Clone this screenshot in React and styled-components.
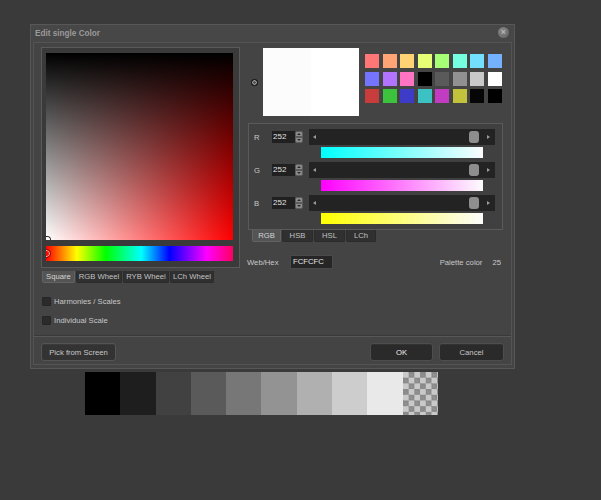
import React from 'react';
import styled, { createGlobalStyle } from 'styled-components';

const Global = createGlobalStyle`
  html, body { margin: 0; padding: 0; background: #3a3a3a; }
  body {
    font-family: "Liberation Sans", Arial, sans-serif;
    font-size: 7.7px;
    color: #c8c8c8;
  }
  * { box-sizing: border-box; }
`;

const Page = styled.div`
  width: 601px;
  height: 500px;
  overflow: hidden;
  padding-top: 24px;
`;

const Dialog = styled.div`
  margin-left: 30px;
  width: 485px;
  border: 1px solid #575757;
  background: #444444;
`;

const TitleBar = styled.div`
  height: 17px;
  display: flex;
  align-items: center;
  justify-content: space-between;
  padding: 0 4px 0 4px;
  background: #474747;
`;

const Title = styled.span`
  font-weight: bold;
  font-size: 8.2px;
  color: #9a9a9a;
`;

const CloseBtn = styled.span`
  width: 11px;
  height: 11px;
  border-radius: 50%;
  background: radial-gradient(circle at 40% 35%, #8a8a8a, #5f5f5f);
  color: #c4c4c4;
  font-size: 9px;
  line-height: 11px;
  text-align: center;
  margin-top: -3px;
  margin-right: 1px;
`;

const Body = styled.div`
  padding: 0 2px 3px 2px;
`;

const Inner = styled.div`
  border: 1px solid #545454;
  padding: 4px 7px 3px 7px;
`;

const Top = styled.div`
  display: flex;
  align-items: flex-start;
  gap: 7px;
`;

const LeftCol = styled.div`
  width: 199px;
  display: flex;
  flex-direction: column;
`;

const Frame = styled.div`
  border: 1px solid #5a5a5a;
  background: #3a3a3a;
  padding: 5px 6px 6px 4px;
  display: flex;
  flex-direction: column;
  gap: 6px;
`;

const Square = styled.div`
  position: relative;
  width: 187px;
  height: 187px;
  overflow: hidden;
  background: linear-gradient(to top, rgba(0,0,0,0), #000),
    linear-gradient(to right, #ffffff, #ff0000);
`;

const SquareCursor = styled.span`
  position: absolute;
  left: -2px;
  bottom: -3px;
  width: 6px;
  height: 6px;
  border-radius: 50%;
  border: 1px solid #ffffff;
  box-shadow: 0 0 0 1px #222;
`;

const Hue = styled.div`
  position: relative;
  width: 187px;
  height: 15px;
  overflow: hidden;
  background: linear-gradient(to right, #ff0000 0%, #ffff00 16.5%, #00ff00 32%,
    #00ffff 51%, #0000ff 66%, #ff00ff 86%, #ff0060 100%);
`;

const HueMarker = styled.span`
  position: absolute;
  left: -4px;
  top: 3px;
  width: 9px;
  height: 9px;
  border-radius: 50%;
  border: 1.5px solid #8a0000;
  box-shadow: inset 0 0 0 1px #ffb0b0;
`;

const Tabs = styled.div`
  display: flex;
  gap: ${p => p.$gap || 1}px;
  margin-left: ${p => p.$ml || 0}px;
  margin-top: ${p => p.$mt || 0}px;
`;

const Tab = styled.div`
  width: ${p => p.$w}px;
  height: 12px;
  line-height: 11px;
  text-align: center;
  white-space: nowrap;
  border-radius: 0 0 2px 2px;
  background: ${p => (p.$active ? '#545454' : '#303030')};
  border: 1px solid ${p => (p.$active ? '#636363' : '#2b2b2b')};
  border-top: none;
  color: ${p => (p.$active ? '#d4d4d4' : '#c2c2c2')};
`;

const CheckRow = styled.label`
  display: flex;
  align-items: center;
  gap: 3px;
  height: 12px;
  margin-top: ${p => p.$mt}px;
  margin-left: 1px;
`;

const Box = styled.span`
  width: 9px;
  height: 9px;
  background: #2b2b2b;
  border: 1px solid #252525;
  border-radius: 1px;
`;

const RightCol = styled.div`
  width: 257px;
  display: flex;
  flex-direction: column;
`;

const PreviewRow = styled.div`
  display: flex;
  align-items: center;
  margin-top: 1px;
  padding-left: 4px;
`;

const Radio = styled.span`
  width: 7px;
  height: 7px;
  border-radius: 50%;
  background: radial-gradient(circle, #505050 0 1px, #a0a0a0 1.5px 2px, #1a1a1a 2.5px);
`;

const Preview = styled.div`
  margin-left: 5px;
  width: 96px;
  height: 68px;
  display: flex;
`;

const PreviewHalf = styled.div`
  flex: 1;
  background: ${p => p.$c};
`;

const SwatchGrid = styled.div`
  margin-left: 6px;
  display: grid;
  grid-template-columns: repeat(8, 14px);
  column-gap: 3.5px;
  row-gap: 3.5px;
  align-self: flex-start;
  margin-top: 6px;
`;

const Swatch = styled.span`
  width: 14px;
  height: 14px;
  background: ${p => p.$c};
`;

const SliderFrame = styled.div`
  margin-top: 7px;
  margin-left: 1px;
  width: 255px;
  border: 1px solid #5a5a5a;
  background: #404040;
  padding: 5px 7px 5px 4px;
  display: flex;
  flex-direction: column;
  gap: 4px;
`;

const SliderRow = styled.div`
  display: grid;
  grid-template-columns: 19px 31px 192px;
  grid-template-rows: 16px 11px;
  row-gap: 2px;
`;

const ChanLabel = styled.span`
  align-self: center;
  color: #c8c8c8;
  padding-left: 1px;
`;

const Spin = styled.div`
  align-self: center;
  display: flex;
  height: 12px;
  width: 31px;
`;

const SpinValue = styled.span`
  width: 23px;
  background: #202020;
  color: #e2e2e2;
  line-height: 12px;
  padding-left: 1px;
  font-size: 8px;
`;

const SpinBtns = styled.span`
  width: 8px;
  display: flex;
  flex-direction: column;
`;

const SpinBtn = styled.span`
  flex: 1;
  background: #8c8c8c;
  border: 1px solid #5c5c5c;
  border-radius: ${p => (p.$up ? '2px 2px 0 0' : '0 0 2px 2px')};
  display: flex;
  align-items: center;
  justify-content: center;
  &::after {
    content: '';
    border-left: 2px solid transparent;
    border-right: 2px solid transparent;
    ${p => (p.$up ? 'border-bottom: 2px solid #2a2a2a;' : 'border-top: 2px solid #2a2a2a;')}
  }
`;

const Track = styled.div`
  margin-left: 6px;
  width: 186px;
  height: 16px;
  background: #232323;
  display: flex;
  align-items: center;
  padding: 0 5px 0 4px;
`;

const Arrow = styled.span`
  width: 0;
  height: 0;
  border-top: 2.5px solid transparent;
  border-bottom: 2.5px solid transparent;
  ${p => (p.$right ? 'border-left: 3px solid #9a9a9a;' : 'border-right: 3px solid #9a9a9a;')}
`;

const Spacer = styled.span`
  flex: 1;
`;

const Thumb = styled.span`
  width: 10px;
  height: 12px;
  border-radius: 3px;
  background: #8e8e8e;
  margin-right: 8px;
`;

const Grad = styled.div`
  grid-column: 3;
  margin: 0 12px 0 18px;
  height: 11px;
  background: linear-gradient(to right, ${p => p.$from}, #fcfcfc);
`;

const HexRow = styled.div`
  display: flex;
  align-items: center;
  height: 14px;
  margin-top: 13px;
`;

const HexLabel = styled.span`
  width: 43px;
`;

const HexInput = styled.span`
  width: 43px;
  height: 14px;
  background: #262626;
  border: 1px solid #4a4a4a;
  color: #e4e4e4;
  line-height: 12px;
  padding-left: 2px;
`;

const PaletteLabel = styled.span`
  margin-left: auto;
`;

const PaletteNum = styled.span`
  margin-left: 10px;
  margin-right: 3px;
`;

const Separator = styled.div`
  margin: 10px -7px 0 -7px;
  border-top: 1px solid #575757;
  box-shadow: 0 -1px 0 #393939;
`;

const Footer = styled.div`
  display: flex;
  align-items: center;
  gap: 6px;
  padding-top: 6px;
`;

const Button = styled.button`
  font-family: inherit;
  font-size: 7.7px;
  width: ${p => p.$w}px;
  height: 18px;
  padding: 0;
  border-radius: 3px;
  border: 1px solid ${p => (p.$dark ? '#4e4e4e' : '#555')};
  background: ${p => (p.$dark ? '#2a2a2a' : '#333333')};
  color: ${p => (p.$bright ? '#f0f0f0' : '#c8c8c8')};
  box-shadow: inset 0 1px 0 rgba(255,255,255,0.04);
  margin-left: ${p => (p.$push ? 'auto' : '0')};
`;

const Strip = styled.div`
  margin: 3px 0 0 85px;
  width: 353px;
  height: 43px;
  display: grid;
  grid-template-columns: repeat(10, 1fr);
`;

const Cell = styled.div`
  background: ${p => p.$c};
`;

const Checker = styled.div`
  background-color: #c9c9c9;
  background-image:
    linear-gradient(45deg, #8a8a8a 25%, transparent 25%, transparent 75%, #8a8a8a 75%),
    linear-gradient(45deg, #8a8a8a 25%, transparent 25%, transparent 75%, #8a8a8a 75%);
  background-size: 11.4px 11.4px;
  background-position: 0 0, 5.7px 5.7px;
`;

const swatches = [
  '#ff7676', '#ffa474', '#ffd274', '#e6ff74', '#a6ff74', '#74ffe0', '#74e0ff', '#74b2ff',
  '#7474ff', '#b274ff', '#ff74c2', '#000000', '#5a5a5a', '#919191', '#c9c9c9', '#ffffff',
  '#c83c3c', '#3cc23c', '#3c3cc8', '#3cc2c2', '#c23cc2', '#c2c23c', '#060606', '#000000',
];

const grays = ['#000000', '#1e1e1e', '#414141', '#5a5a5a', '#777777', '#939393', '#b0b0b0', '#cdcdcd', '#e9e9e9'];

const channels = [
  { l: 'R', from: '#00ffff' },
  { l: 'G', from: '#ff00ff' },
  { l: 'B', from: '#ffff00' },
];

export default function App() {
  return (
    <>
      <Global />
      <Page>
        <Dialog>
          <TitleBar>
            <Title>Edit single Color</Title>
            <CloseBtn>×</CloseBtn>
          </TitleBar>
          <Body>
            <Inner>
              <Top>
                <LeftCol>
                  <Frame>
                    <Square>
                      <SquareCursor />
                    </Square>
                    <Hue>
                      <HueMarker />
                    </Hue>
                  </Frame>
                  <Tabs $mt={3} $ml={1} $gap={1}>
                    <Tab $w={33} $active>Square</Tab>
                    <Tab $w={46}>RGB Wheel</Tab>
                    <Tab $w={46}>RYB Wheel</Tab>
                    <Tab $w={44}>LCh Wheel</Tab>
                  </Tabs>
                  <CheckRow $mt={12}><Box />Harmonies / Scales</CheckRow>
                  <CheckRow $mt={7}><Box />Individual Scale</CheckRow>
                </LeftCol>
                <RightCol>
                  <PreviewRow>
                    <Radio />
                    <Preview>
                      <PreviewHalf $c="#fcfcfc" />
                      <PreviewHalf $c="#ffffff" />
                    </Preview>
                    <SwatchGrid>
                      {swatches.map((c, i) => <Swatch key={i} $c={c} />)}
                    </SwatchGrid>
                  </PreviewRow>
                  <SliderFrame>
                    {channels.map(ch => (
                      <SliderRow key={ch.l}>
                        <ChanLabel>{ch.l}</ChanLabel>
                        <Spin>
                          <SpinValue>252</SpinValue>
                          <SpinBtns>
                            <SpinBtn $up />
                            <SpinBtn />
                          </SpinBtns>
                        </Spin>
                        <Track>
                          <Arrow />
                          <Spacer />
                          <Thumb />
                          <Arrow $right />
                        </Track>
                        <Grad $from={ch.from} />
                      </SliderRow>
                    ))}
                  </SliderFrame>
                  <Tabs $ml={5} $gap={0}>
                    <Tab $w={29} $active>RGB</Tab>
                    <Tab $w={31}>HSB</Tab>
                    <Tab $w={31}>HSL</Tab>
                    <Tab $w={30}>LCh</Tab>
                  </Tabs>
                  <HexRow>
                    <HexLabel>Web/Hex</HexLabel>
                    <HexInput>FCFCFC</HexInput>
                    <PaletteLabel>Palette color</PaletteLabel>
                    <PaletteNum>25</PaletteNum>
                  </HexRow>
                </RightCol>
              </Top>
              <Separator />
              <Footer>
                <Button $w={75}>Pick from Screen</Button>
                <Button $w={63} $dark $bright $push>OK</Button>
                <Button $w={65} $dark>Cancel</Button>
              </Footer>
            </Inner>
          </Body>
        </Dialog>
        <Strip>
          {grays.map(c => <Cell key={c} $c={c} />)}
          <Checker />
        </Strip>
      </Page>
    </>
  );
}
